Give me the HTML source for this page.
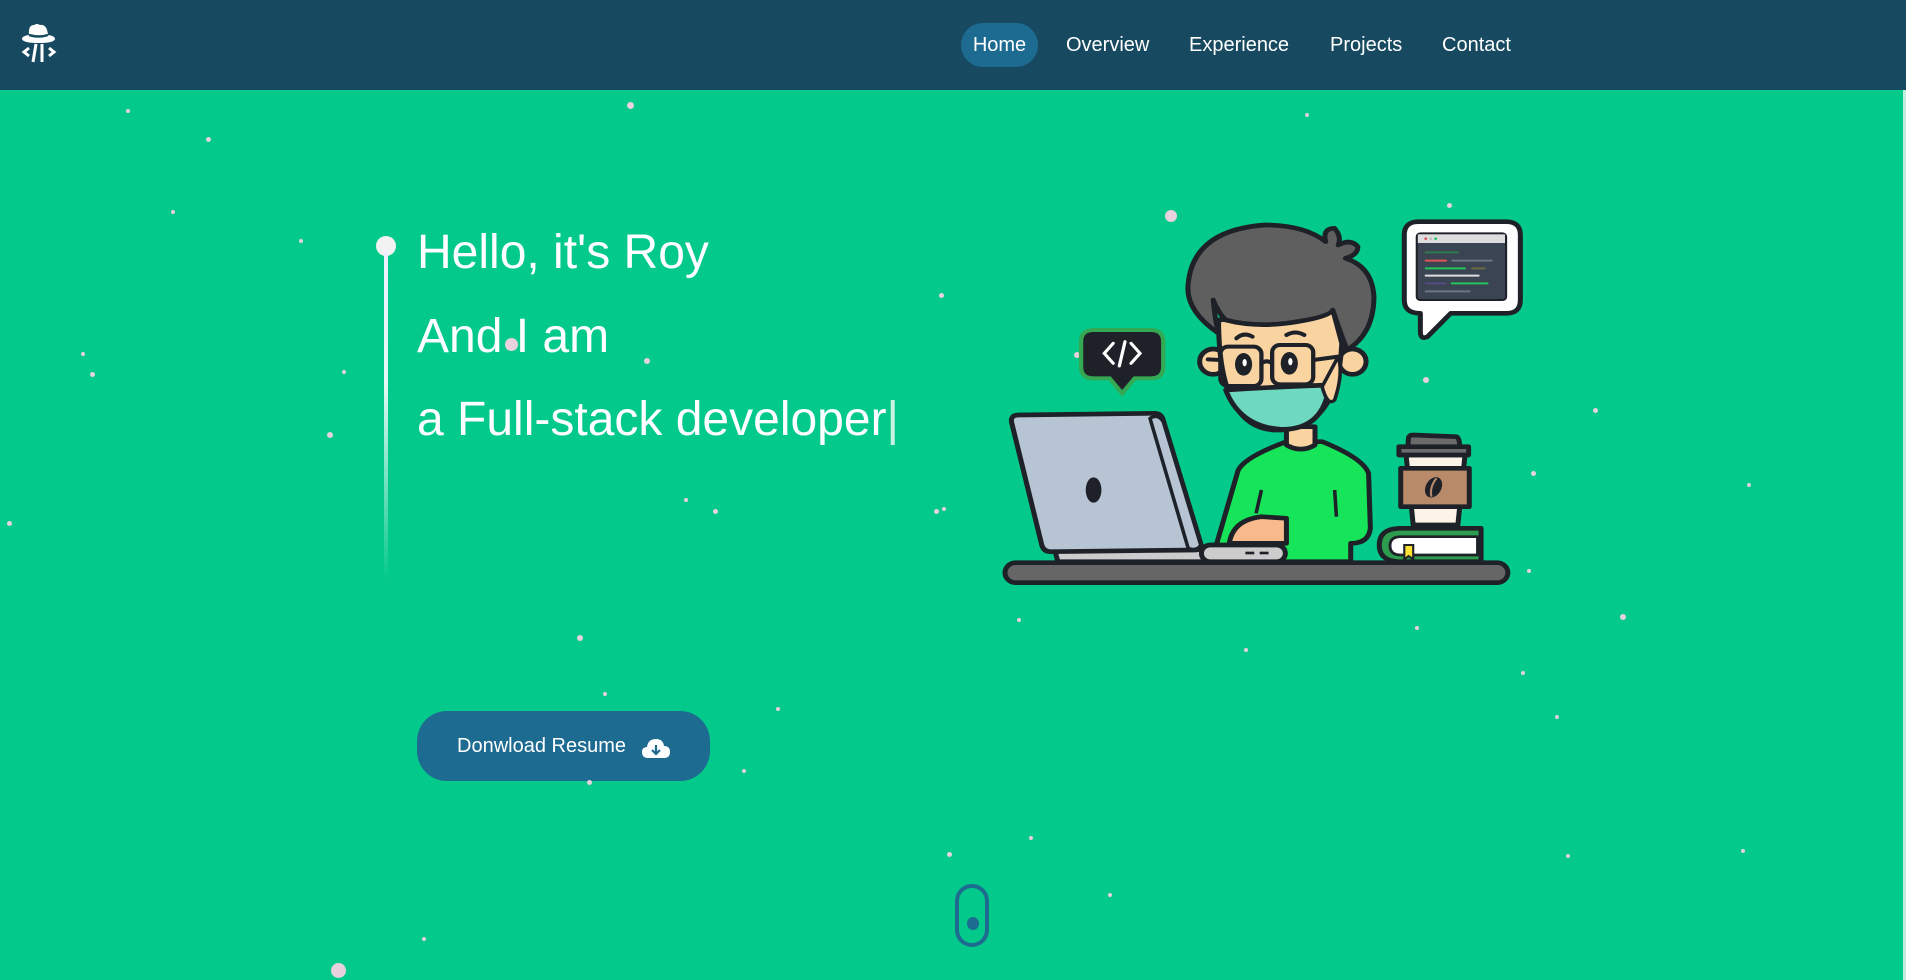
<!DOCTYPE html>
<html><head><meta charset="utf-8"><style>
*{margin:0;padding:0;box-sizing:border-box}
html,body{width:1906px;height:980px;overflow:hidden;background:#03c98a;font-family:"Liberation Sans",sans-serif}
.nav{position:absolute;left:0;top:0;width:1906px;height:90px;background:#174a61}
.nav a{position:absolute;top:23px;height:44px;line-height:44px;color:#fff;font-size:20px;text-decoration:none}
.home{left:961px;width:77px;background:#1e6b91;border-radius:22px;text-align:center}
.h{position:absolute;left:417px;color:#fff;font-size:48px;white-space:nowrap}
.star{position:absolute;border-radius:50%;background:#e8d2dc}
.btn{position:absolute;left:417px;top:711px;width:293px;height:70px;background:#1e6b91;border-radius:30px;color:#fff;font-size:20px}
.btn span{position:absolute;left:40px;top:24px}
</style></head><body>
<div class="nav">
<svg style="position:absolute;left:20px;top:22px" width="38" height="44" viewBox="0 0 38 44">
<path d="M9 13 Q8 3 14 3 Q17 1 20 3 Q27 2 28 13 Q35 14 35 17 Q34 21 19 21 Q3 21 2 17 Q2 14 9 13Z" fill="#fff"/>
<path d="M9 13 Q19 16 28 13" stroke="#174a61" stroke-width="2.5" fill="none"/>
<path d="M9 26 L4 30 L9 34 M29 26 L34 30 L29 34" stroke="#fff" stroke-width="3" fill="none"/>
<path d="M16 22 L13 40 M22 22 L22 40" stroke="#fff" stroke-width="3"/>
</svg>
<a class="home" href="#">Home</a>
<a href="#" style="left:1066px">Overview</a>
<a href="#" style="left:1189px">Experience</a>
<a href="#" style="left:1330px">Projects</a>
<a href="#" style="left:1442px">Contact</a>
</div>
<div style="position:absolute;left:1903px;top:90px;width:3px;height:890px;background:#bfeedd"></div>

<div style="position:absolute;left:376px;top:236px;width:20px;height:20px;border-radius:50%;background:#f2f2f2"></div>
<div style="position:absolute;left:384px;top:250px;width:4px;height:330px;background:linear-gradient(#eef,rgba(255,255,255,0.9) 40%,rgba(255,255,255,0))"></div>
<div class="h" style="top:225px">Hello, it's Roy</div>
<div class="h" style="top:309px">And I am</div>
<div class="h" style="top:392px">a Full-stack developer<span style="color:#c8f3e3">|</span></div>

<div class="btn"><span>Donwload Resume</span>
<svg style="position:absolute;left:225px;top:26px" width="28" height="22" viewBox="0 0 28 22"><path d="M6 21 Q0 21 0 15 Q0 10 5 10 Q6 2 14 2 Q21 2 22 9 Q28 9 28 15 Q28 21 22 21Z" fill="#fff"/><path d="M14 8 V17 M10 13 L14 17 L18 13" stroke="#1e6b91" stroke-width="2.2" fill="none"/></svg></div>

<div style="position:absolute;left:955px;top:884px;width:34px;height:63px;border:4px solid #1e6b91;border-radius:17px"></div>
<div style="position:absolute;left:967px;top:917px;width:12px;height:13px;border-radius:50%;background:#1e6b91"></div>

<div class="star" style="left:126px;top:109px;width:4px;height:4px"></div>
<div class="star" style="left:206px;top:137px;width:5px;height:5px"></div>
<div class="star" style="left:627px;top:102px;width:7px;height:7px"></div>
<div class="star" style="left:171px;top:210px;width:4px;height:4px"></div>
<div class="star" style="left:299px;top:239px;width:4px;height:4px"></div>
<div class="star" style="left:81px;top:352px;width:4px;height:4px"></div>
<div class="star" style="left:90px;top:372px;width:5px;height:5px"></div>
<div class="star" style="left:342px;top:370px;width:4px;height:4px"></div>
<div class="star" style="left:327px;top:432px;width:6px;height:6px"></div>
<div class="star" style="left:7px;top:521px;width:5px;height:5px"></div>
<div class="star" style="left:505px;top:338px;width:13px;height:13px"></div>
<div class="star" style="left:644px;top:358px;width:6px;height:6px"></div>
<div class="star" style="left:684px;top:498px;width:4px;height:4px"></div>
<div class="star" style="left:713px;top:509px;width:5px;height:5px"></div>
<div class="star" style="left:939px;top:293px;width:5px;height:5px"></div>
<div class="star" style="left:934px;top:509px;width:5px;height:5px"></div>
<div class="star" style="left:942px;top:507px;width:4px;height:4px"></div>
<div class="star" style="left:1074px;top:352px;width:6px;height:6px"></div>
<div class="star" style="left:1165px;top:210px;width:12px;height:12px"></div>
<div class="star" style="left:1305px;top:113px;width:4px;height:4px"></div>
<div class="star" style="left:1447px;top:203px;width:5px;height:5px"></div>
<div class="star" style="left:1423px;top:377px;width:6px;height:6px"></div>
<div class="star" style="left:1593px;top:408px;width:5px;height:5px"></div>
<div class="star" style="left:1531px;top:471px;width:5px;height:5px"></div>
<div class="star" style="left:1747px;top:483px;width:4px;height:4px"></div>
<div class="star" style="left:1527px;top:569px;width:4px;height:4px"></div>
<div class="star" style="left:1620px;top:614px;width:6px;height:6px"></div>
<div class="star" style="left:1415px;top:626px;width:4px;height:4px"></div>
<div class="star" style="left:1521px;top:671px;width:4px;height:4px"></div>
<div class="star" style="left:1555px;top:715px;width:4px;height:4px"></div>
<div class="star" style="left:1244px;top:648px;width:4px;height:4px"></div>
<div class="star" style="left:1017px;top:618px;width:4px;height:4px"></div>
<div class="star" style="left:577px;top:635px;width:6px;height:6px"></div>
<div class="star" style="left:603px;top:692px;width:4px;height:4px"></div>
<div class="star" style="left:776px;top:707px;width:4px;height:4px"></div>
<div class="star" style="left:742px;top:769px;width:4px;height:4px"></div>
<div class="star" style="left:587px;top:780px;width:5px;height:5px"></div>
<div class="star" style="left:947px;top:852px;width:5px;height:5px"></div>
<div class="star" style="left:1029px;top:836px;width:4px;height:4px"></div>
<div class="star" style="left:1108px;top:893px;width:4px;height:4px"></div>
<div class="star" style="left:1566px;top:854px;width:4px;height:4px"></div>
<div class="star" style="left:1741px;top:849px;width:4px;height:4px"></div>
<div class="star" style="left:422px;top:937px;width:4px;height:4px"></div>
<div class="star" style="left:331px;top:963px;width:15px;height:15px"></div>

<svg style="position:absolute;left:990px;top:200px" width="560" height="400" viewBox="0 0 1568 1200" preserveAspectRatio="none">
<g stroke="#1e2228" stroke-width="14" stroke-linejoin="round" stroke-linecap="round">
<path d="M1200 65 H1445 Q1485 65 1485 105 V300 Q1485 340 1445 340 H1290 L1225 410 Q1205 420 1205 395 V340 Q1160 340 1160 300 V105 Q1160 65 1200 65Z" fill="#fff"/>
</g>
<rect x="1195" y="100" width="250" height="200" rx="10" fill="#3b4452" stroke="#1e2228" stroke-width="6"/>
<rect x="1198" y="103" width="244" height="26" fill="#ddd"/>
<circle cx="1220" cy="116" r="4" fill="#e05555"/><circle cx="1234" cy="116" r="4" fill="#bbb"/><circle cx="1248" cy="116" r="4" fill="#22c55e"/>
<g stroke-width="6" stroke-linecap="round">
<line x1="1220" y1="157" x2="1310" y2="157" stroke="#2f7a4d"/>
<line x1="1220" y1="182" x2="1277" y2="182" stroke="#e05555"/><line x1="1295" y1="182" x2="1405" y2="182" stroke="#6b7685"/>
<line x1="1220" y1="205" x2="1330" y2="205" stroke="#22c55e"/><line x1="1350" y1="205" x2="1385" y2="205" stroke="#6b6a45"/>
<line x1="1220" y1="227" x2="1368" y2="227" stroke="#ddd"/>
<line x1="1220" y1="250" x2="1275" y2="250" stroke="#574a80"/><line x1="1293" y1="250" x2="1393" y2="250" stroke="#22c55e"/>
<line x1="1220" y1="274" x2="1343" y2="274" stroke="#6b7685"/>
</g>
<path d="M290 390 H450 Q485 390 485 425 V500 Q485 535 450 535 H405 L370 580 L335 535 H290 Q255 535 255 500 V425 Q255 390 290 390Z" fill="#1e2228" stroke="#34a853" stroke-width="12"/>
<path d="M345 430 L320 460 L345 490 M395 430 L420 460 L395 490 M378 425 L362 498" stroke="#fff" stroke-width="9" fill="none" stroke-linecap="round"/>
<g stroke="#1e2228" stroke-width="14" stroke-linejoin="round">
<path d="M620 1085 L695 810 Q715 770 830 725 L930 725 Q1045 775 1060 820 L1065 985 Q1060 1030 1010 1030 L1010 1085Z" fill="#16e55a"/>
<path d="M760 870 L745 940 M965 870 L970 950" fill="none" stroke-width="10"/>
<path d="M670 1030 Q680 960 760 950 L830 955 L830 1030Z" fill="#f8b98c"/>
<path d="M830 680 L830 735 Q870 760 910 735 L910 680Z" fill="#f9d3a0"/>
<circle cx="625" cy="485" r="38" fill="#f9d3a0"/>
<circle cx="1015" cy="485" r="38" fill="#f9d3a0"/>
<path d="M640 360 Q640 700 815 690 Q975 680 985 430 L960 330Z" fill="#f9d3a0"/>
<path d="M660 570 Q810 560 950 555 Q935 690 815 688 Q700 680 660 570Z" fill="#6fd8c0"/>
<path d="M930 560 L975 470 Q990 520 965 600 Q945 620 930 560Z" fill="#f9d3a0" stroke-width="10"/>
<path d="M640 400 Q545 330 555 250 Q570 90 770 75 Q880 75 940 125 Q930 85 965 85 Q985 110 975 135 Q1010 115 1030 140 Q1030 165 995 175 Q1070 200 1075 290 Q1075 400 1000 450 Q975 380 960 330 Q950 350 860 365 Q750 385 660 360 Q640 340 625 300 Q630 360 640 400Z" fill="#5f5f5f"/>
</g>
<g stroke="#1e2228" stroke-width="12" fill="none" stroke-linecap="round">
<path d="M690 415 Q710 395 735 410 M830 405 Q855 390 880 405"/>
<rect x="645" y="440" width="115" height="118" rx="22"/>
<rect x="790" y="435" width="115" height="118" rx="22"/>
<path d="M760 490 Q775 478 790 490 M905 480 L975 470 M645 480 L610 478"/>
</g>
<ellipse cx="710" cy="493" rx="24" ry="34" fill="#1e2228"/><ellipse cx="713" cy="488" rx="6" ry="11" fill="#fff"/>
<ellipse cx="838" cy="490" rx="24" ry="34" fill="#1e2228"/><ellipse cx="841" cy="485" rx="6" ry="11" fill="#fff"/>
<g stroke="#1e2228" stroke-width="14" stroke-linejoin="round">
<rect x="42" y="1088" width="1408" height="60" rx="30" fill="#666"/>
<path d="M180 1045 L600 1040 L600 1085 L190 1085Z" fill="#ccc"/>
<path d="M60 665 Q58 645 80 645 L460 640 Q480 640 485 660 L590 1030 Q595 1050 575 1050 L170 1055 Q150 1055 145 1035Z" fill="#b7c4d3"/>
<path d="M448 655 Q470 640 485 665 L590 1035 Q580 1055 555 1045Z" fill="#b7c4d3" stroke-width="10"/>
<rect x="592" y="1035" width="235" height="50" rx="25" fill="#ccc"/>
<path d="M1150 985 H1375 V1085 H1150 Q1090 1085 1090 1035 Q1090 985 1150 985Z" fill="#2e9c4e"/>
</g>
<ellipse cx="290" cy="870" rx="22" ry="38" fill="#1e2228"/>
<rect x="715" y="1055" width="25" height="8" fill="#1e2228"/><rect x="755" y="1055" width="25" height="8" fill="#1e2228"/>
<path d="M1150 1010 H1365 V1065 H1150 Q1120 1065 1120 1037 Q1120 1010 1150 1010Z" fill="#fff" stroke="#1e2228" stroke-width="8"/>
<path d="M1160 1035 H1185 V1078 L1172 1068 L1160 1078Z" fill="#ffe135" stroke="#1e2228" stroke-width="6"/>
<g stroke="#1e2228" stroke-width="14" stroke-linejoin="round">
<path d="M1165 765 H1330 L1310 975 H1185Z" fill="#fdf3e6"/>
<rect x="1150" y="805" width="192" height="115" fill="#b98a6a"/>
<path d="M1145 740 H1340 V765 H1145Z" fill="#6b6b6b"/>
<path d="M1172 712 Q1175 705 1185 705 L1305 710 Q1315 712 1315 740 H1170Z" fill="#6b6b6b"/>
</g>
<ellipse cx="1242" cy="862" rx="22" ry="32" transform="rotate(25 1242 862)" fill="#1e2228"/>
<path d="M1250 835 Q1230 862 1236 890" stroke="#b98a6a" stroke-width="6" fill="none"/>
</svg>
</body></html>
